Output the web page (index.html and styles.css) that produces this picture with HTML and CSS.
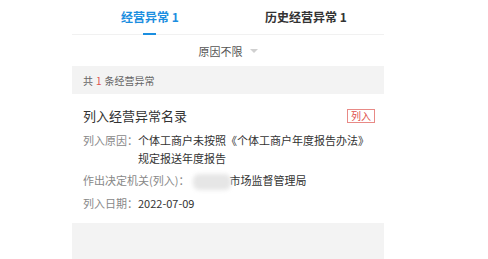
FILE: index.html
```html
<!DOCTYPE html>
<html lang="zh">
<head>
<meta charset="utf-8">
<link rel="stylesheet" href="styles.css">
</head>
<body>
<div class="page">
  <div class="tabs">
    <div class="tab active">经营异常 1<span class="bar"></span></div>
    <div class="tab">历史经营异常 1</div>
  </div>
  <div class="filter">原因不限<span class="caret"></span></div>
  <div class="count">共 <span class="num">1</span> 条经营异常</div>
  <div class="card">
    <div class="head">
      <div class="title">列入经营异常名录</div>
      <div class="badge">列入</div>
    </div>
    <div class="row"><span class="label">列入原因：</span><span class="value">个体工商户未按照《个体工商户年度报告办法》规定报送年度报告</span></div>
    <div class="row"><span class="label">作出决定机关(列入)：</span><span class="value"><span class="mask"></span>市场监督管理局</span></div>
    <div class="row"><span class="label">列入日期：</span><span class="value">2022-07-09</span></div>
  </div>
  <div class="footer"></div>
</div>
</body>
</html>
```
FILE: styles.css
```css
* { box-sizing: border-box; }
html, body { margin: 0; padding: 0; background: #fff; }
body { font-family: "Noto Sans CJK SC", "Noto Sans", sans-serif; color: #333; }
.page { width: 312px; margin-left: 72px; }
.tabs { display: flex; height: 35px; border-bottom: 1px solid #f1f1f1; }
.tab { flex: 1; position: relative; display: flex; justify-content: center; align-items: center; padding-bottom: 1px; font-size: 12px; font-weight: bold; color: #333; }
.tab.active { color: #1b8ee0; }
.tab .bar { position: absolute; bottom: -1px; left: 71px; width: 13px; height: 2px; background: #1b8ee0; }
.filter { height: 31px; display: flex; justify-content: center; align-items: center; font-size: 11px; color: #555; }
.caret { margin-left: 7px; width: 0; height: 0; border-left: 4px solid transparent; border-right: 4px solid transparent; border-top: 4px solid #d0d0d0; }
.count { height: 28px; background: #f3f3f3; display: flex; align-items: center; padding-left: 11px; font-size: 10px; color: #666; }
.count .num { color: #e0504c; margin: 0 3px; }
.card { padding: 13px 9px 7px 11px; }
.head { display: flex; justify-content: space-between; align-items: center; margin-bottom: 6px; height: 18px; }
.title { font-size: 13px; color: #333; line-height: 18px; }
.badge { font-size: 10px; color: #e0504c; border: 1px solid #e88a86; padding: 0 3px; line-height: 12px; height: 14px; }
.row { display: flex; font-size: 11px; line-height: 18px; margin-bottom: 4px; }
.label { color: #888; flex: none; }
.value { color: #333; }
.row:first-of-type .label { width: 55px; }
.mask { display: inline-block; vertical-align: middle; width: 38px; height: 16px; background: #e6e6e6; border-radius: 6px; filter: blur(2px); margin-left: 4px; margin-right: -2px; }
.footer { height: 37px; background: #f3f3f3; }
```
